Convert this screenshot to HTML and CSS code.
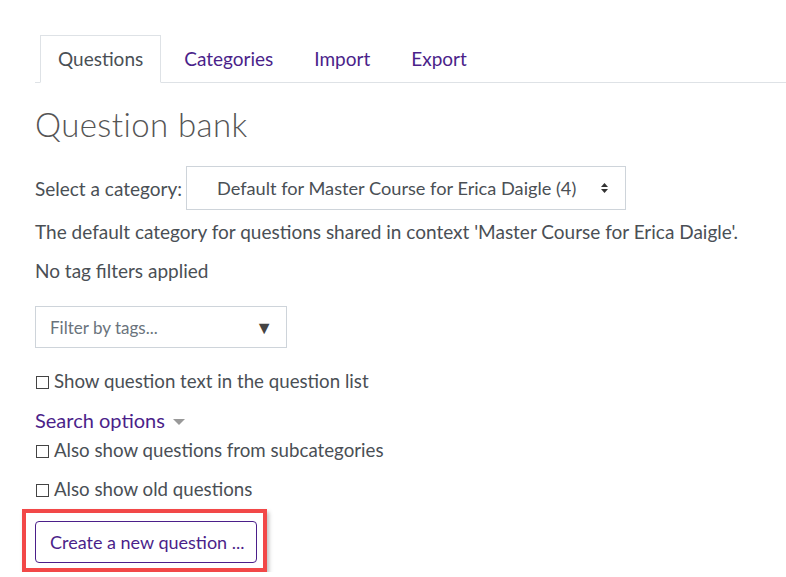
FILE: index.html
```html
<!DOCTYPE html>
<html lang="en">
<head>
<meta charset="utf-8">
<title>Question bank</title>
<link rel="stylesheet" href="styles.css">
</head>
<body>
<div class="page">
  <ul class="tabs">
    <li class="tab active">Questions</li>
    <li class="tab"><a href="#">Categories</a></li>
    <li class="tab"><a href="#">Import</a></li>
    <li class="tab"><a href="#">Export</a></li>
  </ul>
  <h2 class="title">Question bank</h2>
  <div class="selrow">
    <label class="sellabel">Select a category:</label>
    <div class="select">
      <span class="seltext">Default for Master Course for Erica Daigle (4)</span>
      <svg class="updown" width="9" height="12" viewBox="0 0 9 12"><path d="M4.5 1 L8 5 H1 Z M4.5 11 L8 7 H1 Z" fill="#333"/></svg>
    </div>
  </div>
  <p class="line desc">The default category for questions shared in context 'Master Course for Erica Daigle'.</p>
  <p class="line notag">No tag filters applied</p>
  <div class="filter">
    <span class="ph">Filter by tags...</span>
    <span class="tri">▼</span>
  </div>
  <p class="line chk chk1"><span class="box"></span>Show question text in the question list</p>
  <p class="search"><a href="#">Search options</a><span class="caret"></span></p>
  <p class="line chk chk2"><span class="box"></span>Also show questions from subcategories</p>
  <p class="line chk chk3"><span class="box"></span>Also show old questions</p>
  <div class="highlight">
    <button class="btn">Create a new question ...</button>
  </div>
</div>
</body>
</html>
```
FILE: styles.css
```css
html, body { margin: 0; padding: 0; background: #fff; }
body {
  font-family: "Lato", "Liberation Sans", sans-serif;
  color: #4a4f55;
  font-size: 19px;
  overflow: hidden;
}
.page { padding: 35px 0 0 35px; width: 900px; }
a { color: #4b1f8a; text-decoration: none; }

.tabs {
  list-style: none; margin: 0; padding: 0 0 0 5px;
  display: flex; border-bottom: 1px solid #dee2e6;
}
.tab {
  height: 48px; box-sizing: border-box;
  padding: 0 17px 1px; margin: 0 5px -1px 0;
  border: 1px solid transparent;
  display: flex; align-items: center;
  font-size: 19px;
}
.tab.active { border-color: #dee2e6; border-bottom-color: #fff; background: #fff; }

.title {
  font-family: "Lato", sans-serif; font-weight: 300;
  font-size: 33px; color: #555; margin: 21px 0 0 0; line-height: 40px;
  letter-spacing: 0.4px;
}

.selrow { display: flex; align-items: center; margin-top: 22px; }
.sellabel { margin-right: 4px; }
.select {
  width: 440px; height: 44px; box-sizing: border-box;
  border: 1px solid #ced4da; display: flex; align-items: center;
  padding: 0 16px 0 30px; justify-content: space-between;
}
.seltext { font-size: 18.2px; }
.line { margin: 0; line-height: 24px; }
.desc { margin-top: 10px; }
.notag { margin-top: 15px; }
.filter {
  margin-top: 23px; width: 252px; height: 42px; box-sizing: border-box;
  border: 1px solid #ced4da; display: flex; align-items: center;
  justify-content: space-between; padding: 0 13px 0 14px;
}
.ph { color: #6a737c; font-size: 17px; }
.tri { color: #444; font-size: 18px; }
.chk { font-size: 18.7px; }
.chk1 { margin-top: 21px; }
.box {
  display: inline-block; width: 11px; height: 11px;
  border: 1px solid #444; margin: 0 5px 0 1px; vertical-align: -1px;
}
.search { margin: 15px 0 0 0; line-height: 24px; font-size: 20px; }
.caret {
  display: inline-block; width: 0; height: 0; margin-left: 8px;
  border-left: 6px solid transparent; border-right: 6px solid transparent;
  border-top: 6px solid #999; vertical-align: 3px;
}
.chk2 { margin-top: 6px; }
.chk3 { margin-top: 15px; }
.highlight {
  margin: 8px 0 0 -13px; width: 245px; height: 63px; box-sizing: border-box;
  border: 4px solid #f24848; padding: 8px 0 0 9px;
  box-shadow: 2px 3px 4px rgba(0,0,0,0.25);
}
.btn {
  width: 222px; height: 42px; box-sizing: border-box;
  border: 1px solid #4b1f8a; border-radius: 4px; background: #fff;
  color: #4b1f8a; font-family: inherit; font-size: 18px;
  padding: 0 0 0 14px; text-align: left;
}
```
